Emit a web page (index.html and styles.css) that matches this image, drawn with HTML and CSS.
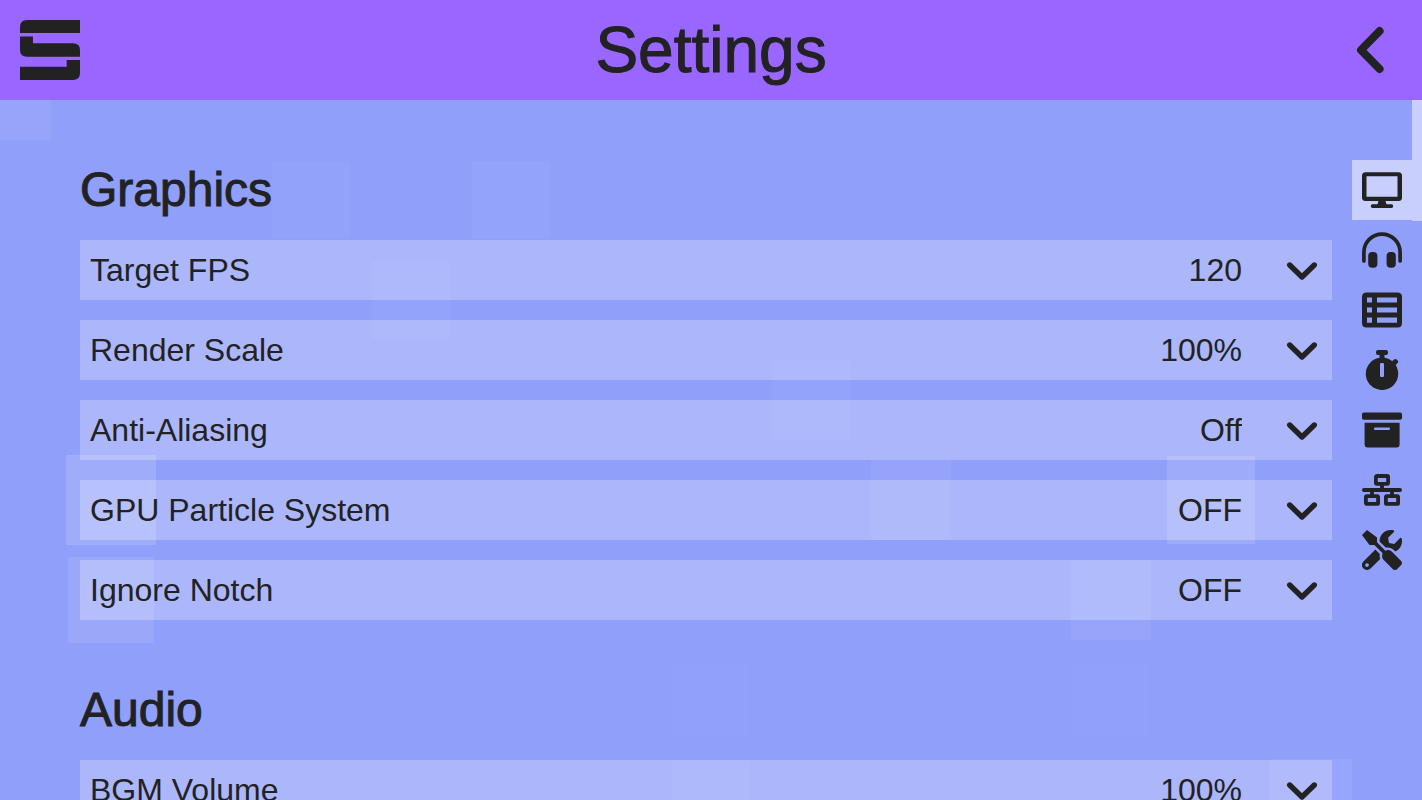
FILE: index.html
```html
<!DOCTYPE html>
<html lang="en">
<head>
  <meta charset="UTF-8">
  <title>Settings</title>
  <meta name="viewport" content="width=device-width, initial-scale=1.0">
  <link rel="stylesheet" href="styles.css">
</head>
<body>

  <!-- floating background squares -->
  <svg class="particles" aria-hidden="true" fill="#fff">
    <rect x="-29" y="60" width="80" height="80" opacity=".06"/>
    <rect x="272" y="162" width="78" height="76" opacity=".025"/>
    <rect x="472" y="161" width="78" height="78" opacity=".03"/>
    <rect x="372" y="261" width="78" height="78" opacity=".03"/>
    <rect x="772" y="361" width="78" height="79" opacity=".03"/>
    <rect x="871" y="460" width="80" height="80" opacity=".05"/>
    <rect x="66" y="455" width="90" height="90" opacity=".14"/>
    <rect x="68" y="557" width="86" height="86" opacity=".1"/>
    <rect x="1167" y="456" width="88" height="88" opacity=".13"/>
    <rect x="1071" y="560" width="80" height="80" opacity=".06"/>
    <rect x="1073" y="662" width="76" height="76" opacity=".01"/>
    <rect x="673" y="662" width="76" height="76" opacity=".01"/>
    <rect x="672" y="761" width="78" height="78" opacity=".03"/>
    <rect x="1270" y="759" width="82" height="82" opacity=".07"/>
  </svg>

  <header class="header">
    <svg class="logo" viewBox="0 0 60 60" role="img" aria-label="Logo">
      <path d="M7 0H60V13H0V7Q0 0 7 0ZM0 16.5H13V23.3H53Q60 23.3 60 30V36.7H7Q0 36.7 0 30ZM0 46.7H46.7V40H60V53Q60 60 53 60H0Z"/>
    </svg>
    <h1 class="title">Settings</h1>
    <button class="back" aria-label="Back">
      <svg viewBox="0 0 60 60"><path class="line thick" d="M37.6 11L19 30L37.6 49"/></svg>
    </button>
  </header>

  <div class="page">
    <main class="content">
      <section class="group" id="graphics">
        <h2 class="heading">Graphics</h2>
        <div class="row">
          <label for="fps">Target FPS</label>
          <select id="fps"><option>120</option></select>
          <svg class="arrow" viewBox="0 0 60 60"><path class="line" d="M17.7 25L30 37L42.3 25"/></svg>
        </div>
        <div class="row">
          <label for="scale">Render Scale</label>
          <select id="scale"><option>100%</option></select>
          <svg class="arrow" viewBox="0 0 60 60"><path class="line" d="M17.7 25L30 37L42.3 25"/></svg>
        </div>
        <div class="row">
          <label for="aa">Anti-Aliasing</label>
          <select id="aa"><option>Off</option></select>
          <svg class="arrow" viewBox="0 0 60 60"><path class="line" d="M17.7 25L30 37L42.3 25"/></svg>
        </div>
        <div class="row">
          <label for="gpu">GPU Particle System</label>
          <select id="gpu"><option>OFF</option></select>
          <svg class="arrow" viewBox="0 0 60 60"><path class="line" d="M17.7 25L30 37L42.3 25"/></svg>
        </div>
        <div class="row">
          <label for="notch">Ignore Notch</label>
          <select id="notch"><option>OFF</option></select>
          <svg class="arrow" viewBox="0 0 60 60"><path class="line" d="M17.7 25L30 37L42.3 25"/></svg>
        </div>
      </section>

      <section class="group" id="audio">
        <h2 class="heading">Audio</h2>
        <div class="row">
          <label for="bgm">BGM Volume</label>
          <select id="bgm"><option>100%</option></select>
          <svg class="arrow" viewBox="0 0 60 60"><path class="line" d="M17.7 25L30 37L42.3 25"/></svg>
        </div>
      </section>
    </main>

    <nav class="tabs">
      <a class="tab active" href="#graphics" aria-label="Graphics">
        <svg viewBox="0 0 40 40">
          <path fill-rule="evenodd" d="M3.5 2.3H36.5Q40 2.3 40 5.8V27.5Q40 31 36.5 31H23.5L24.5 34.3H29.5Q31.2 34.3 31.2 36.1T29.5 38H10.5Q8.8 38 8.8 36.1T10.5 34.3H15.5L16.5 31H3.5Q0 31 0 27.5V5.8Q0 2.3 3.5 2.3ZM4.5 6.3V26.7H35.5V6.3Z"/>
        </svg>
      </a>
      <a class="tab" href="#audio" aria-label="Audio">
        <svg viewBox="0 0 40 40">
          <path d="M1.9 31V22.2A18.1 18.1 0 0 1 38.1 22.2V31" fill="none" stroke="#222" stroke-width="3.7" stroke-linecap="round"/>
          <rect x="6.2" y="22" width="9.2" height="15.8" rx="4"/>
          <rect x="24.6" y="22" width="9.2" height="15.8" rx="4"/>
        </svg>
      </a>
      <a class="tab" href="#list" aria-label="List">
        <svg viewBox="0 0 40 40">
          <path fill-rule="evenodd" d="M4.5 2.4H35.5Q40 2.4 40 6.9V33Q40 37.5 35.5 37.5H4.5Q0 37.5 0 33V6.9Q0 2.4 4.5 2.4ZM5 7.4V12.6H10V7.4ZM15 7.4V12.6H35V7.4ZM5 17.5V22.6H10V17.5ZM15 17.5V22.6H35V17.5ZM5 27.5V32.7H10V27.5ZM15 27.5V32.7H35V27.5Z"/>
        </svg>
      </a>
      <a class="tab" href="#timing" aria-label="Timing">
        <svg viewBox="0 0 40 40">
          <path fill-rule="evenodd" d="M16 0H24Q26 0 26 2V3Q26 5 24 5H22.5V7.8C25.5 8.3 28.1 9.5 30.2 11.3L32 9.5Q33.4 8.3 34.7 9.5L35.6 10.4Q36.8 11.7 35.6 13L33.7 14.9C35.3 17.5 36.2 20.5 36.2 23.8A16.2 16.2 0 1 1 17.5 7.8V5H16Q14 5 14 3V2Q14 0 16 0ZM19.2 13Q18 13 18 14.2V25.8Q18 27 19.2 27H20.8Q22 27 22 25.8V14.2Q22 13 20.8 13Z"/>
        </svg>
      </a>
      <a class="tab" href="#storage" aria-label="Storage">
        <svg viewBox="0 0 40 40">
          <rect x="0" y="2.5" width="40" height="7.3" rx="1.8"/>
          <path fill-rule="evenodd" d="M2.6 12.7H37.6V34.5Q37.6 37.5 34.6 37.5H5.6Q2.6 37.5 2.6 34.5ZM13 17.4Q12 17.4 12 18.7T13 20H27Q28 20 28 18.7T27 17.4Z"/>
        </svg>
      </a>
      <a class="tab" href="#network" aria-label="Network">
        <svg viewBox="0 0 40 40">
          <path d="M1.9 20H38.1M20 14V20M10 20V26M30 20V26" fill="none" stroke="#222" stroke-width="3.8" stroke-linecap="round"/>
          <g fill="none" stroke="#222" stroke-width="3.8">
            <rect x="13.9" y="6" width="12.2" height="7.8" rx="1"/>
            <rect x="3.9" y="26.1" width="12.2" height="7.8" rx="1"/>
            <rect x="23.9" y="26.1" width="12.2" height="7.8" rx="1"/>
          </g>
        </svg>
      </a>
      <a class="tab" href="#tools" aria-label="Tools">
        <svg viewBox="0 0 512 512">
          <path d="M501.1 395.7L384 278.6c-23.1-23.1-57.6-27.6-85.4-13.9L192 158.1V96L64 0 0 64l96 128h62.1l106.6 106.6c-13.6 27.8-9.2 62.3 13.9 85.4l117.1 117.1c14.6 14.6 38.2 14.6 52.7 0l52.7-52.7c14.5-14.6 14.5-38.2 0-52.7zM331.7 225c28.3 0 54.9 11 74.9 31l19.4 19.4c15.8-6.9 30.8-16.5 43.8-29.5 37.1-37.1 49.7-89.3 37.9-136.7-2.2-9-13.5-12.1-20.1-5.5l-74.4 74.4-67.9-11.3L334 98.9l74.4-74.4c6.6-6.6 3.4-17.9-5.7-20.2-47.4-11.7-99.6.9-136.6 37.9-28.5 28.5-41.9 66.1-41.2 103.6l82.1 82.1c8.1-1.9 16.5-2.9 24.7-2.9zm-103.9 82l-56.7-56.7L18.7 402.8c-25 25-25 65.5 0 90.5s65.5 25 90.5 0l123.6-123.6c-7.6-19.9-9.9-41.6-5-62.7zM64 472c-13.2 0-24-10.8-24-24 0-13.3 10.7-24 24-24s24 10.7 24 24c0 13.2-10.7 24-24 24z"/>
        </svg>
      </a>
    </nav>

    <div class="scrollbar"><div class="thumb"></div></div>
  </div>

</body>
</html>
```
FILE: styles.css
```css
* {
  box-sizing: border-box;
}
body {
  margin: 0;
  height: 100vh;
  display: flex;
  flex-direction: column;
  overflow: hidden;
  font-family: "Liberation Sans", Arial, sans-serif;
  font-size: 32px;
  color: #222;
  background: #909ffa;
}
svg {
  display: block;
}
.particles {
  position: absolute;
  top: 0;
  left: 0;
  width: 100%;
  height: 100%;
  z-index: -1;
}
.header {
  display: flex;
  align-items: center;
  justify-content: space-between;
  flex: none;
  height: 100px;
  padding: 0 20px;
  background: #9966ff;
}
.logo {
  width: 60px;
  height: 60px;
  fill: #222;
}
.title,
.heading {
  margin: 0;
  font-weight: normal;
  -webkit-text-stroke: 1px #222;
}
.title {
  font-size: 64px;
  line-height: 100px;
}
.back {
  width: 60px;
  height: 60px;
  padding: 0;
  border: none;
  background: none;
  cursor: pointer;
}
.line {
  fill: none;
  stroke: #222;
  stroke-width: 5.4;
  stroke-linecap: round;
  stroke-linejoin: round;
}
.thick {
  stroke-width: 8;
}
.page {
  flex: 1;
  display: flex;
  min-height: 0;
}
.content {
  flex: 1;
  padding: 60px 20px 0 80px;
  overflow: hidden;
}
.group {
  display: flex;
  flex-direction: column;
  gap: 20px;
  margin-bottom: 60px;
}
.heading {
  font-size: 48px;
  line-height: 60px;
}
.row {
  display: flex;
  align-items: center;
  height: 60px;
  padding-left: 10px;
  background: rgba(255, 255, 255, 0.25);
}
.row select {
  flex: 1;
  height: 60px;
  padding: 0 30px;
  border: none;
  background: none;
  appearance: none;
  font: inherit;
  color: inherit;
  text-align: right;
  text-align-last: right;
  cursor: pointer;
}
.arrow {
  width: 60px;
  height: 60px;
}
.tabs {
  width: 60px;
  padding-top: 60px;
}
.tab {
  display: block;
  padding: 10px;
}
.tab svg {
  width: 40px;
  height: 40px;
  fill: #222;
}
.active {
  background: rgba(255, 255, 255, 0.5);
}
.scrollbar {
  width: 10px;
}
.thumb {
  height: 121px;
  background: rgba(255, 255, 255, 0.5);
}
```
